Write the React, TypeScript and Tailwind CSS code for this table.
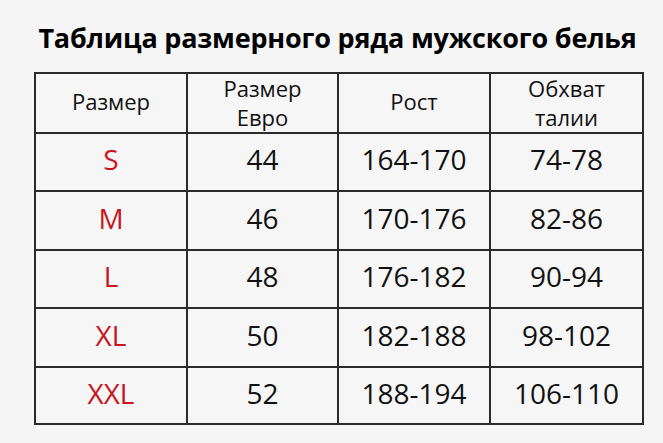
const rows = [
  ["S", "44", "164-170", "74-78"],
  ["M", "46", "170-176", "82-86"],
  ["L", "48", "176-182", "90-94"],
  ["XL", "50", "182-188", "98-102"],
  ["XXL", "52", "188-194", "106-110"],
];

export default function App() {
  return (
    <div className="h-[443px] w-[663px] overflow-hidden bg-[#f5f5f5] text-[#111] [font-family:'Open_Sans',sans-serif]">
      <h1 className="pl-[12px] pt-[24px] text-center text-[27px] font-bold leading-[28px] tracking-[-0.2px] text-black">
        Таблица размерного ряда мужского белья
      </h1>
      <div className="ml-[34px] mt-[20px] grid w-[610px] grid-cols-[150px_149px_150px_151px] grid-rows-[58px_56px_57px_56px_57px_55px] gap-[2px] bg-[#2b2b2b] p-[2px]">
        <div className="flex items-center justify-center bg-[#f6f6f6] pb-[4px] text-[22px]">Размер</div>
        <div className="flex flex-col items-center justify-center bg-[#f6f6f6] text-[22px] leading-[29px]">
          <span>Размер</span>
          <span>Евро</span>
        </div>
        <div className="flex items-center justify-center bg-[#f6f6f6] pb-[4px] text-[22px]">Рост</div>
        <div className="flex flex-col items-center justify-center bg-[#f6f6f6] text-[22px] leading-[29px]">
          <span>Обхват</span>
          <span>талии</span>
        </div>
        {rows.map((r) =>
          r.map((cell, i) => (
            <div
              key={r[0] + i}
              className={
                "flex items-center justify-center bg-[#f6f6f6] pb-[6px] text-[28px] " +
                (i === 0 ? "text-[#c8161d]" : "")
              }
            >
              {cell}
            </div>
          ))
        )}
      </div>
    </div>
  );
}
